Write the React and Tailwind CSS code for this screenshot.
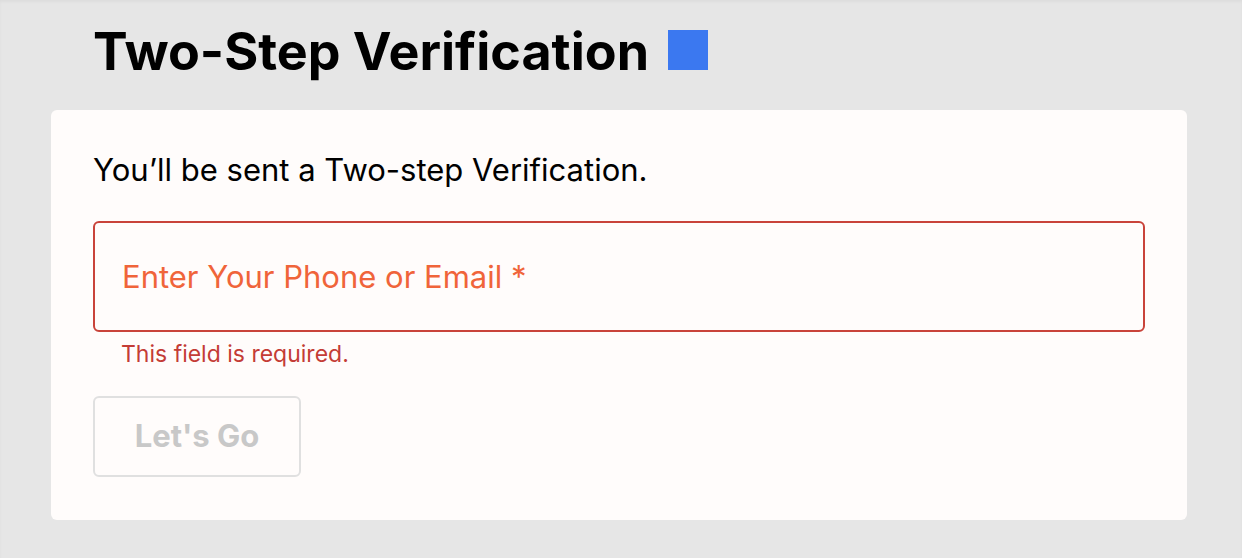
import React, { useState } from "react";

function App() {
  const [value, setValue] = useState("");

  return (
    <div
      className="min-h-screen bg-[#e6e6e6] pl-[51px] pr-[55px] pt-[22px] pb-[38px] shadow-[inset_0_2px_3px_rgba(0,0,0,0.04)]"
      style={{ fontFamily: "Inter, 'Noto Sans', sans-serif" }}
    >
      <div className="flex items-center gap-[19px] pl-[42px] h-[60px]">
        <h1 className="text-[52px] font-bold text-black leading-none">
          Two-Step Verification
        </h1>
        <span className="block w-[40px] h-[40px] bg-[#3b78f0] -mt-[4px]"></span>
      </div>

      <div className="mt-[28px] bg-[#fffcfb] rounded-[6px] px-[42px] pt-[40px] pb-[43px]">
        <p className="text-[31px] text-black leading-[40px]">
          You’ll be sent a Two-step Verification.
        </p>

        <div className="mt-[31px]">
          <input
            type="text"
            value={value}
            onChange={(e) => setValue(e.target.value)}
            placeholder="Enter Your Phone or Email *"
            className="w-full h-[111px] border-2 border-[#c9433a] rounded-[6px] bg-transparent px-[27px] text-[31px] outline-none placeholder:text-[#f0643a]"
          />
          <p className="mt-[8px] pl-[28px] text-[23px] text-[#c43c36] leading-[28px]">
            This field is required.
          </p>
        </div>

        <button
          disabled
          className="mt-[28px] w-[208px] h-[81px] border-2 border-[#e0e0e0] rounded-[6px] text-[31px] font-bold text-[#c8c8c8]"
        >
          Let's Go
        </button>
      </div>
    </div>
  );
}

export default App;
